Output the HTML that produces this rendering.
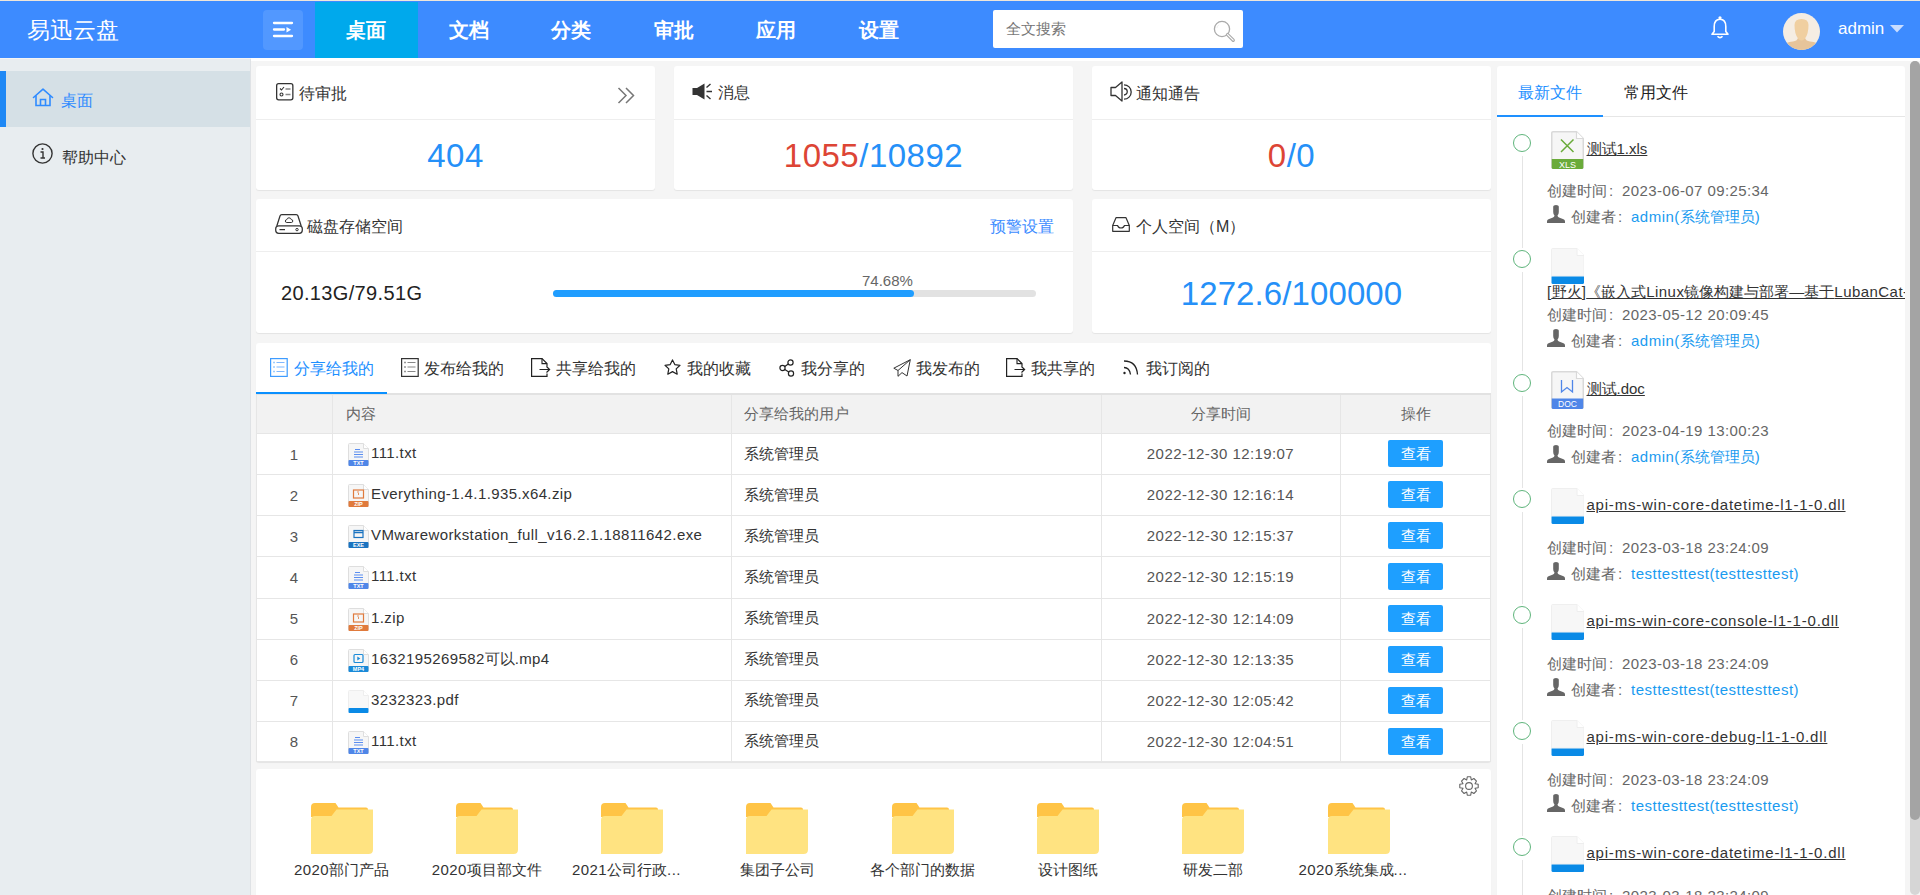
<!DOCTYPE html><html><head><meta charset="utf-8"><title>易迅云盘</title><style>
*{box-sizing:border-box;margin:0;padding:0}
html,body{width:1920px;height:895px;overflow:hidden}
body{position:relative;background:#f5f5f5;font-family:"Liberation Sans",sans-serif;color:#333;font-size:14px}
.a{position:absolute;white-space:nowrap}
svg{display:block;overflow:visible}
.card{position:absolute;background:#fff;border-radius:3px;box-shadow:0 1px 1px rgba(0,0,0,0.07)}
.hl{position:absolute;height:1px;background:#eeeeee}
.nav{position:absolute;top:2px;height:56px;width:102.5px;text-align:center;color:#fff;font-weight:900;font-size:20px;line-height:56px}
.ttl{font-size:16px;color:#333;line-height:22px}
.num{font-size:33px;color:#2590f8;line-height:40px;text-align:center;letter-spacing:0.5px}
.red{color:#dd4535}
.tab{font-size:16px;color:#333;line-height:22px}
.th{font-size:14.5px;color:#666;line-height:20px}
.tn{font-size:15px;color:#555;line-height:22px;width:76px;left:256px;text-align:center}
.tc{font-size:15px;color:#333;line-height:22px}
.tdt{left:1101px;width:239px;text-align:center;color:#555}
.btn{left:1388px;width:55px;height:27px;background:#1e9fff;border-radius:2px;color:#fff;font-size:15px;line-height:27px;text-align:center}
.tb{left:256px;width:1235px;height:1px;background:#e6e6e6}
.tl{font-size:15px;color:#666;line-height:22px}
.lk{color:#1a9bf0}
.fn{font-size:15px;color:#333;line-height:22px;text-decoration:underline}
.fl{font-size:15px;color:#333;line-height:22px;text-align:center;width:140px}
</style></head><body>
<svg width="0" height="0" style="position:absolute"><defs>
<symbol id="fbody" viewBox="0 0 21 23"><path d="M1.5 0.5H15.5L20.5 5.5V21.5a1 1 0 0 1-1 1H1.5a1 1 0 0 1-1-1V1.5a1 1 0 0 1 1-1z" fill="#f6f6f6" stroke="#dedede" stroke-width="1"/><path d="M15.5 0.5V5.5H20.5" fill="#fff" stroke="#dedede" stroke-width="1"/></symbol>
<symbol id="fi-txt" viewBox="0 0 21 23"><use href="#fbody"/><path d="M7 6.5h5M6 9h9M6 11.5h9M6 14h9" stroke="#5b8ef0" stroke-width="1"/><rect x="0.5" y="17" width="20" height="6" rx="1" fill="#4f86e8"/><text x="10.5" y="22" font-size="5.5" fill="#fff" text-anchor="middle" font-family="Liberation Sans" font-weight="bold">TXT</text></symbol>
<symbol id="fi-zip" viewBox="0 0 21 23"><use href="#fbody"/><rect x="5.5" y="6" width="10" height="8" fill="none" stroke="#e07a3c" stroke-width="1.2"/><path d="M10 7v2M10.5 9v2" stroke="#e07a3c" stroke-width="0.8"/><rect x="0.5" y="17" width="20" height="6" rx="1" fill="#e07a3c"/><text x="10.5" y="22" font-size="5.5" fill="#fff" text-anchor="middle" font-family="Liberation Sans" font-weight="bold">ZIP</text></symbol>
<symbol id="fi-exe" viewBox="0 0 21 23"><use href="#fbody"/><rect x="6" y="5.5" width="9" height="7" fill="none" stroke="#1a73c0" stroke-width="1.2"/><path d="M6 7.5h9" stroke="#1a73c0" stroke-width="1.5"/><rect x="0.5" y="17" width="20" height="6" rx="1" fill="#1a73c0"/><text x="10.5" y="22" font-size="5.5" fill="#fff" text-anchor="middle" font-family="Liberation Sans" font-weight="bold">EXE</text></symbol>
<symbol id="fi-mp4" viewBox="0 0 21 23"><use href="#fbody"/><rect x="6" y="5.5" width="9" height="8" rx="1" fill="none" stroke="#1a8ad8" stroke-width="1.2"/><path d="M9.3 7.6v3.8l3-1.9z" fill="#1a8ad8"/><rect x="0.5" y="17" width="20" height="6" rx="1" fill="#1a8ad8"/><text x="10.5" y="22" font-size="5.5" fill="#fff" text-anchor="middle" font-family="Liberation Sans" font-weight="bold">MP4</text></symbol>
<symbol id="fi-pdf" viewBox="0 0 21 23"><path d="M1.5 0.5H15.5L20.5 5.5V19H0.5V1.5a1 1 0 0 1 1-1z" fill="#f8f8f8" stroke="#eeeeee" stroke-width="1"/><path d="M15.5 0.5V5.5H20.5" fill="#fff" stroke="#eeeeee" stroke-width="1"/><rect x="0.5" y="18" width="20" height="5" rx="1" fill="#0a8ae6"/></symbol>
<symbol id="ti-body" viewBox="0 0 33 38"><path d="M2 0.75H25.5L32.25 7.5V36a1.5 1.5 0 0 1-1.5 1.5H2A1.5 1.5 0 0 1 0.75 36V2A1.25 1.25 0 0 1 2 0.75z" fill="#f6f6f6" stroke="#d9d9d9" stroke-width="1.5"/><path d="M25.5 0.75V7.5H32.25" fill="#fff" stroke="#d9d9d9" stroke-width="1.2"/></symbol>
<symbol id="ti-xls" viewBox="0 0 33 38"><use href="#ti-body"/><path d="M10 8.5l12.5 12.5M22.5 8.5L10 21" stroke="#6aab3a" stroke-width="1.5"/><path d="M0.75 28H32.25V36.5a1.5 1.5 0 0 1-1.5 1.5H2.25a1.5 1.5 0 0 1-1.5-1.5z" fill="#6aab3a"/><text x="16.5" y="36.5" font-size="9" fill="#fff" text-anchor="middle" font-family="Liberation Sans">XLS</text></symbol>
<symbol id="ti-doc" viewBox="0 0 33 38"><use href="#ti-body"/><path d="M10.5 9V21L16 16.5L21.5 21V9" fill="none" stroke="#4f86e8" stroke-width="1.3"/><path d="M0.75 27.5H32.25V36.5a1.5 1.5 0 0 1-1.5 1.5H2.25a1.5 1.5 0 0 1-1.5-1.5z" fill="#4f86e8"/><text x="16.5" y="36" font-size="8.5" fill="#fff" text-anchor="middle" font-family="Liberation Sans">DOC</text></symbol>
<symbol id="ti-dll" viewBox="0 0 33 36"><path d="M1.5 0.5H26L33 7.5V28H0.5V1.5a1 1 0 0 1 1-1z" fill="#f7f7f7" stroke="#efefef" stroke-width="1"/><path d="M26 0.5V7.5H33" fill="#fff" stroke="#eeeeee" stroke-width="1"/><path d="M0.5 28.5H33V34.5a1.5 1.5 0 0 1-1.5 1.5H2a1.5 1.5 0 0 1-1.5-1.5z" fill="#0a8ae6"/></symbol>
<symbol id="folder" viewBox="0 0 62 51"><path d="M0 4Q0 0 4 0H24.5L27.5 4.5H55Q57 4.5 57 6.5V14H0z" fill="#ffc446"/><path d="M0 17Q0 13 4 13H20.5L25.5 6.5H62V46.5Q62 51 57.5 51H0z" fill="#ffe381"/></symbol>
<symbol id="person" viewBox="0 0 18 18"><path d="M6.2 1.5Q6.2 0 9 0Q11.8 0 11.8 1.5V7Q11.8 9.5 10.5 10.5Q10.7 12 12 12.5L16.5 14.2Q18 14.8 18 16.5V18H0V16.5Q0 14.8 1.5 14.2L6 12.5Q7.3 12 7.5 10.5Q6.2 9.5 6.2 7z" fill="#666"/></symbol>
</defs></svg>
<div class="a" style="left:0;top:0;width:1920px;height:1px;background:#efe6da"></div>
<div class="a" style="left:0;top:1px;width:1920px;height:57px;background:#3d8bff"></div>
<div class="a" style="left:251px;top:58px;width:1669px;height:3px;background:#fff"></div>
<div class="a" style="left:27px;top:15.5px;font-size:22.5px;color:#fff;line-height:30px">易迅云盘</div>
<div class="a" style="left:263px;top:10px;width:40px;height:40px;border-radius:4px;background:#5298ff"></div>
<svg class="a" style="left:273px;top:21px" width="20" height="18"><path d="M1 2h18M1 8.5h10M1 15h18" stroke="#fff" stroke-width="2.3" stroke-linecap="round"/><path d="M13.5 6v5.5l4.6-2.75z" fill="#fff"/></svg>
<div class="nav" style="left:315.0px;background:#00a9ec">桌面</div>
<div class="nav" style="left:417.5px">文档</div>
<div class="nav" style="left:520.0px">分类</div>
<div class="nav" style="left:622.5px">审批</div>
<div class="nav" style="left:725.0px">应用</div>
<div class="nav" style="left:827.5px">设置</div>
<div class="a" style="left:993px;top:10px;width:250px;height:38px;background:#fff;border-radius:2px"></div>
<div class="a" style="left:1006px;top:18px;font-size:15px;color:#777;line-height:22px">全文搜索</div>
<svg class="a" style="left:1213px;top:20px" width="23" height="22"><circle cx="9" cy="9" r="7.6" fill="none" stroke="#aaaaaa" stroke-width="1.3"/><circle cx="9" cy="9" r="5.2" fill="none" stroke="#e6e6e6" stroke-width="0.6" stroke-dasharray="4 30" transform="rotate(190 9 9)"/><path d="M14.6 14.6l5.6 5.6" stroke="#aaaaaa" stroke-width="3.4" stroke-linecap="round"/><path d="M14.6 14.6l5.6 5.6" stroke="#ffffff" stroke-width="1.2" stroke-linecap="round"/></svg>
<svg class="a" style="left:1711px;top:16px" width="18" height="23"><circle cx="9" cy="1.8" r="1.6" fill="#fff"/><path d="M9 3.2C4.5 3.2 3.2 7 3.2 10.5V15.5L1 18.3H17L14.8 15.5V10.5C14.8 7 13.5 3.2 9 3.2z" fill="none" stroke="#fff" stroke-width="1.6" stroke-linejoin="round"/><path d="M6.5 20.3Q9 23 11.5 20.3" fill="none" stroke="#fff" stroke-width="1.6"/></svg>
<svg class="a" style="left:1783px;top:13px" width="37" height="37"><defs><clipPath id="avc"><circle cx="18.5" cy="18.5" r="18.5"/></clipPath></defs><g clip-path="url(#avc)"><rect width="37" height="37" fill="#f5ede3"/><path d="M0 37V33Q2 29 10 28.5Q14 28 15 25L22 25Q23 28 27 28.5Q35 29 37 33V37z" fill="#e6c49a"/><path d="M11.5 12Q11.5 6 18.5 6Q25.5 6 25.5 12Q25.5 21 22 25.5Q20.5 27.5 18.5 27.5Q16.5 27.5 15 25.5Q11.5 21 11.5 12z" fill="#f0cfa0"/></g></svg>
<div class="a" style="left:1838px;top:18px;font-size:17px;color:#fff;line-height:22px">admin</div>
<svg class="a" style="left:1890px;top:25px" width="14" height="8"><path d="M0 0H14L7 7.5z" fill="#c9ddff"/></svg>
<div class="a" style="left:0;top:59px;width:251px;height:836px;background:#e8edf0;border-right:1px solid #dfe2e5"></div>
<div class="a" style="left:0;top:71px;width:250px;height:56px;background:#d5e0e6"></div>
<div class="a" style="left:0;top:71px;width:6px;height:56px;background:#1e88f5"></div>
<svg class="a" style="left:32px;top:88px" width="22" height="19"><path d="M1.5 9.5L11 1.2L20.5 9.5" fill="none" stroke="#2f8bff" stroke-width="1.6" stroke-linejoin="round" stroke-linecap="round"/><path d="M4 7.5V17.5H18V7.5" fill="none" stroke="#2f8bff" stroke-width="1.6"/><path d="M8.5 17.5V11.5H13.5V17.5" fill="none" stroke="#2f8bff" stroke-width="1.6"/></svg>
<div class="a" style="left:61px;top:90px;font-size:16px;color:#2f8bff;line-height:22px">桌面</div>
<svg class="a" style="left:32px;top:143px" width="21" height="21"><circle cx="10.5" cy="10.5" r="9.6" fill="none" stroke="#333" stroke-width="1.4"/><circle cx="10.5" cy="6" r="1.1" fill="#333"/><path d="M8.5 9H11V15M8.5 15H13" fill="none" stroke="#333" stroke-width="1.4"/></svg>
<div class="a" style="left:62px;top:146.5px;font-size:16px;color:#333;line-height:22px">帮助中心</div>
<div class="card" style="left:256px;top:66px;width:399px;height:124px"></div>
<div class="card" style="left:674px;top:66px;width:399px;height:124px"></div>
<div class="card" style="left:1092px;top:66px;width:399px;height:124px"></div>
<div class="card" style="left:256px;top:199px;width:817px;height:134px"></div>
<div class="card" style="left:1092px;top:199px;width:399px;height:134px"></div>
<div class="card" style="left:256px;top:343px;width:1235px;height:419px"></div>
<div class="card" style="left:256px;top:769px;width:1235px;height:140px"></div>
<div class="card" style="left:1497px;top:66px;width:408px;height:840px"></div>
<div class="hl" style="left:256px;top:119px;width:399px"></div>
<div class="hl" style="left:674px;top:119px;width:399px"></div>
<div class="hl" style="left:1092px;top:119px;width:399px"></div>
<div class="hl" style="left:256px;top:251px;width:817px"></div>
<div class="hl" style="left:1092px;top:251px;width:399px"></div>
<svg class="a" style="left:276px;top:83px" width="18" height="18"><rect x="0.65" y="0.65" width="16.2" height="16.2" rx="2" fill="none" stroke="#333" stroke-width="1.3"/><path d="M4 5.5l1.5 1.5l2.5-3" fill="none" stroke="#333" stroke-width="1.1"/><circle cx="5.5" cy="11.5" r="1.5" fill="none" stroke="#333" stroke-width="1.1"/><path d="M9.5 6h5M9.5 11.5h5" stroke="#888" stroke-width="1.4"/></svg>
<div class="a ttl" style="left:299px;top:83px">待审批</div>
<svg class="a" style="left:617px;top:87px" width="19" height="18"><path d="M1.5 1l7.5 7.5l-7.5 7.5M9 1l7.5 7.5l-7.5 7.5" fill="none" stroke="#777" stroke-width="1.5"/></svg>
<div class="a num" style="left:256px;top:135.5px;width:399px">404</div>
<svg class="a" style="left:692px;top:83px" width="21" height="17"><path d="M0.5 5H5L12.5 0.5V16.5L5 12H0.5z" fill="#333"/><path d="M14.5 4.5L18.5 1M14.5 8.5H20M14.5 12.5L18.5 16" stroke="#333" stroke-width="1.4"/></svg>
<div class="a ttl" style="left:718px;top:82px">消息</div>
<div class="a num" style="left:674px;top:135.5px;width:399px"><span class="red">1055</span>/10892</div>
<svg class="a" style="left:1110px;top:81px" width="22" height="21"><path d="M1 6.5H5.5L12 1V20L5.5 14.5H1z" fill="none" stroke="#333" stroke-width="1.3" stroke-linejoin="round"/><path d="M14 7.5A3.2 3.2 0 0 1 14 14" fill="none" stroke="#333" stroke-width="1.3"/><path d="M14 3.8A7 7 0 0 1 14 18.2" fill="none" stroke="#333" stroke-width="1.3"/></svg>
<div class="a ttl" style="left:1136px;top:83px">通知通告</div>
<div class="a num" style="left:1092px;top:135.5px;width:399px"><span class="red">0</span>/0</div>
<svg class="a" style="left:275px;top:214px" width="28" height="20"><path d="M1.8 12L5 2Q5.4 0.7 6.8 0.7H21.2Q22.6 0.7 23 2L26.2 12" fill="none" stroke="#333" stroke-width="1.25"/><rect x="0.7" y="11.8" width="26.6" height="7.5" rx="3" fill="none" stroke="#333" stroke-width="1.25"/><path d="M4.5 15.6H10" stroke="#333" stroke-width="1.25"/><circle cx="22" cy="15.6" r="1.2" fill="none" stroke="#333" stroke-width="1"/><path d="M11.8 8.5H16.3Q17.8 8.5 17.8 7Q17.8 5.6 16.3 5.6Q15.8 3.8 14 3.8Q12.2 3.8 11.8 5.6Q10.3 5.8 10.3 7Q10.3 8.5 11.8 8.5z" fill="none" stroke="#333" stroke-width="1"/></svg>
<div class="a ttl" style="left:307px;top:216px">磁盘存储空间</div>
<div class="a ttl" style="left:990px;top:216px;color:#3c8cff">预警设置</div>
<div class="a" style="left:281px;top:280px;font-size:20px;color:#222;line-height:26px;letter-spacing:0.35px">20.13G/79.51G</div>
<div class="a" style="left:553px;top:290px;width:483px;height:7px;border-radius:4px;background:#e2e2e2"></div>
<div class="a" style="left:553px;top:290px;width:361px;height:7px;border-radius:4px;background:#1f9dff"></div>
<div class="a" style="left:862px;top:270.5px;font-size:15px;color:#666;line-height:20px">74.68%</div>
<svg class="a" style="left:1112px;top:217px" width="18" height="15"><path d="M0.7 8.5L4 0.7H14L17.3 8.5V14.3H0.7z" fill="none" stroke="#333" stroke-width="1.2" stroke-linejoin="round"/><path d="M0.7 8.5H5.5Q6.5 11 9 11Q11.5 11 12.5 8.5H17.3" fill="none" stroke="#333" stroke-width="1.2"/></svg>
<div class="a ttl" style="left:1136px;top:216px">个人空间（M）</div>
<div class="a num" style="left:1092px;top:274px;width:399px;letter-spacing:0.1px">1272.6/100000</div>
<div class="a tab" style="left:293.6px;top:358px;color:#1e90ff">分享给我的</div>
<div class="a tab" style="left:424px;top:358px;color:#333">发布给我的</div>
<div class="a tab" style="left:555.5px;top:358px;color:#333">共享给我的</div>
<div class="a tab" style="left:687px;top:358px;color:#333">我的收藏</div>
<div class="a tab" style="left:801px;top:358px;color:#333">我分享的</div>
<div class="a tab" style="left:916px;top:358px;color:#333">我发布的</div>
<div class="a tab" style="left:1031px;top:358px;color:#333">我共享的</div>
<div class="a tab" style="left:1146px;top:358px;color:#333">我订阅的</div>
<svg class="a" style="left:270px;top:358px" width="18" height="19"><rect x="0.6" y="0.6" width="16.6" height="17.8" fill="none" stroke="#3d9bff" stroke-width="1.2"/><path d="M3.5 4.5h1M3.5 9h1M3.5 13.5h1" stroke="#3d9bff" stroke-width="1.3"/><path d="M6.5 4.5h8M6.5 9h8M6.5 13.5h8" stroke="#7fb8ff" stroke-width="1.1"/></svg>
<svg class="a" style="left:400.5px;top:358px" width="18" height="19"><rect x="0.6" y="0.6" width="16.6" height="17.8" fill="none" stroke="#333" stroke-width="1.2"/><path d="M3.5 4.5h1M3.5 9h1M3.5 13.5h1" stroke="#333" stroke-width="1.3"/><path d="M6.5 4.5h8M6.5 9h8M6.5 13.5h8" stroke="#888" stroke-width="1.1"/></svg>
<svg class="a" style="left:530.5px;top:357.5px" width="20" height="19"><path d="M16 8.5V5.6L11 0.6H0.6V18.4H16V15.5" fill="none" stroke="#222" stroke-width="1.2"/><path d="M11 0.6V5.6H16" fill="none" stroke="#222" stroke-width="1.1"/><path d="M8.5 11.5H18.5M15.5 8.5L18.6 11.5L15.5 14.5" fill="none" stroke="#222" stroke-width="1.2"/></svg>
<svg class="a" style="left:1006px;top:357.5px" width="20" height="19"><path d="M16 8.5V5.6L11 0.6H0.6V18.4H16V15.5" fill="none" stroke="#222" stroke-width="1.2"/><path d="M11 0.6V5.6H16" fill="none" stroke="#222" stroke-width="1.1"/><path d="M8.5 11.5H18.5M15.5 8.5L18.6 11.5L15.5 14.5" fill="none" stroke="#222" stroke-width="1.2"/></svg>
<svg class="a" style="left:663.5px;top:359px" width="17" height="17"><path d="M8.5 0.9L10.8 5.6L16 6.3L12.2 9.9L13.2 15.2L8.5 12.6L3.8 15.2L4.8 9.9L1 6.3L6.2 5.6z" fill="none" stroke="#222" stroke-width="1.2" stroke-linejoin="round"/></svg>
<svg class="a" style="left:779px;top:359px" width="16" height="18"><circle cx="11.5" cy="3.5" r="2.6" fill="none" stroke="#222" stroke-width="1.2"/><circle cx="3.5" cy="9" r="2.6" fill="none" stroke="#222" stroke-width="1.2"/><circle cx="12" cy="14.5" r="2.6" fill="none" stroke="#222" stroke-width="1.2"/><path d="M5.8 7.6L9.3 5M5.8 10.4L9.8 13" stroke="#222" stroke-width="1.2"/></svg>
<svg class="a" style="left:892.5px;top:358.5px" width="18" height="18"><path d="M17.3 0.7L0.8 9.2L5 11.5M17.3 0.7L14 17L9 13.6M17.3 0.7L5 11.5V17.3L9 13.6" fill="none" stroke="#333" stroke-width="1" stroke-linejoin="round"/></svg>
<svg class="a" style="left:1123px;top:360px" width="16" height="15"><circle cx="1.5" cy="13" r="1.2" fill="#222"/><path d="M1 7.5Q6.5 7.5 7.5 14.5M1 1Q13.5 1 14.5 14.5" fill="none" stroke="#222" stroke-width="1.3"/></svg>
<div class="a" style="left:256px;top:393px;width:1235px;height:2px;background:#e2e2e2"></div>
<div class="a" style="left:256px;top:392px;width:131px;height:2px;background:#0a90ff"></div>
<div class="a" style="left:256px;top:395px;width:1235px;height:38px;background:#f2f2f2"></div>
<div class="a tb" style="top:433px"></div>
<div class="a tb" style="top:761px"></div>
<div class="a" style="left:256px;top:395px;width:1px;height:367px;background:#e6e6e6"></div>
<div class="a" style="left:332px;top:395px;width:1px;height:367px;background:#e6e6e6"></div>
<div class="a" style="left:731px;top:395px;width:1px;height:367px;background:#e6e6e6"></div>
<div class="a" style="left:1101px;top:395px;width:1px;height:367px;background:#e6e6e6"></div>
<div class="a" style="left:1340px;top:395px;width:1px;height:367px;background:#e6e6e6"></div>
<div class="a" style="left:1490px;top:395px;width:1px;height:367px;background:#e6e6e6"></div>
<div class="a th" style="left:346px;top:404px">内容</div>
<div class="a th" style="left:744px;top:404px">分享给我的用户</div>
<div class="a th" style="left:1101px;top:404px;width:239px;text-align:center">分享时间</div>
<div class="a th" style="left:1340px;top:404px;width:151px;text-align:center">操作</div>
<div class="a tn" style="top:443.6px">1</div>
<svg class="a" style="left:348px;top:443.1px" width="21" height="23"><use href="#fi-txt"/></svg>
<div class="a tc" style="left:371px;top:442.1px"><span style="letter-spacing:0.4px">111.txt</span></div>
<div class="a tc" style="left:744px;top:442.6px">系统管理员</div>
<div class="a tc tdt" style="top:443.1px;letter-spacing:0.42px">2022-12-30 12:19:07</div>
<div class="a btn" style="top:440.1px">查看</div>
<div class="a tn" style="top:484.7px">2</div>
<svg class="a" style="left:348px;top:484.2px" width="21" height="23"><use href="#fi-zip"/></svg>
<div class="a tc" style="left:371px;top:483.2px"><span style="letter-spacing:0.4px">Everything-1.4.1.935.x64.zip</span></div>
<div class="a tc" style="left:744px;top:483.7px">系统管理员</div>
<div class="a tc tdt" style="top:484.2px;letter-spacing:0.42px">2022-12-30 12:16:14</div>
<div class="a btn" style="top:481.2px">查看</div>
<div class="a tb" style="top:474px"></div>
<div class="a tn" style="top:525.8px">3</div>
<svg class="a" style="left:348px;top:525.3px" width="21" height="23"><use href="#fi-exe"/></svg>
<div class="a tc" style="left:371px;top:524.3px"><span style="letter-spacing:0.4px">VMwareworkstation_full_v16.2.1.18811642.exe</span></div>
<div class="a tc" style="left:744px;top:524.8px">系统管理员</div>
<div class="a tc tdt" style="top:525.3px;letter-spacing:0.42px">2022-12-30 12:15:37</div>
<div class="a btn" style="top:522.3px">查看</div>
<div class="a tb" style="top:515px"></div>
<div class="a tn" style="top:566.9px">4</div>
<svg class="a" style="left:348px;top:566.4px" width="21" height="23"><use href="#fi-txt"/></svg>
<div class="a tc" style="left:371px;top:565.4px"><span style="letter-spacing:0.4px">111.txt</span></div>
<div class="a tc" style="left:744px;top:565.9px">系统管理员</div>
<div class="a tc tdt" style="top:566.4px;letter-spacing:0.42px">2022-12-30 12:15:19</div>
<div class="a btn" style="top:563.4px">查看</div>
<div class="a tb" style="top:556px"></div>
<div class="a tn" style="top:608.1px">5</div>
<svg class="a" style="left:348px;top:607.6px" width="21" height="23"><use href="#fi-zip"/></svg>
<div class="a tc" style="left:371px;top:606.6px"><span style="letter-spacing:0.4px">1.zip</span></div>
<div class="a tc" style="left:744px;top:607.1px">系统管理员</div>
<div class="a tc tdt" style="top:607.6px;letter-spacing:0.42px">2022-12-30 12:14:09</div>
<div class="a btn" style="top:604.6px">查看</div>
<div class="a tb" style="top:598px"></div>
<div class="a tn" style="top:649.2px">6</div>
<svg class="a" style="left:348px;top:648.7px" width="21" height="23"><use href="#fi-mp4"/></svg>
<div class="a tc" style="left:371px;top:647.7px"><span style="letter-spacing:0.4px">1632195269582</span>可以<span style="letter-spacing:0.4px">.mp4</span></div>
<div class="a tc" style="left:744px;top:648.2px">系统管理员</div>
<div class="a tc tdt" style="top:648.7px;letter-spacing:0.42px">2022-12-30 12:13:35</div>
<div class="a btn" style="top:645.7px">查看</div>
<div class="a tb" style="top:639px"></div>
<div class="a tn" style="top:690.3px">7</div>
<svg class="a" style="left:348px;top:689.8px" width="21" height="23"><use href="#fi-pdf"/></svg>
<div class="a tc" style="left:371px;top:688.8px"><span style="letter-spacing:0.4px">3232323.pdf</span></div>
<div class="a tc" style="left:744px;top:689.3px">系统管理员</div>
<div class="a tc tdt" style="top:689.8px;letter-spacing:0.42px">2022-12-30 12:05:42</div>
<div class="a btn" style="top:686.8px">查看</div>
<div class="a tb" style="top:680px"></div>
<div class="a tn" style="top:731.4px">8</div>
<svg class="a" style="left:348px;top:730.9px" width="21" height="23"><use href="#fi-txt"/></svg>
<div class="a tc" style="left:371px;top:729.9px"><span style="letter-spacing:0.4px">111.txt</span></div>
<div class="a tc" style="left:744px;top:730.4px">系统管理员</div>
<div class="a tc tdt" style="top:730.9px;letter-spacing:0.42px">2022-12-30 12:04:51</div>
<div class="a btn" style="top:727.9px">查看</div>
<div class="a tb" style="top:721px"></div>
<svg class="a" style="left:1459px;top:776px" width="20" height="20"><path d="M8.3 0.8H11.7L12.3 4L14.9 2.5L17.5 5.1L16 7.7L19.2 8.3V11.7L16 12.3L17.5 14.9L14.9 17.5L12.3 16L11.7 19.2H8.3L7.7 16L5.1 17.5L2.5 14.9L4 12.3L0.8 11.7V8.3L4 7.7L2.5 5.1L5.1 2.5L7.7 4z" fill="none" stroke="#666" stroke-width="1.1" stroke-linejoin="round"/><circle cx="10" cy="10" r="3.4" fill="none" stroke="#666" stroke-width="1.1"/></svg>
<svg class="a" style="left:310.5px;top:803px" width="62" height="51"><use href="#folder"/></svg>
<div class="a fl" style="left:271.5px;top:859px"><span style="letter-spacing:0.4px">2020</span>部门产品</div>
<svg class="a" style="left:455.8px;top:803px" width="62" height="51"><use href="#folder"/></svg>
<div class="a fl" style="left:416.8px;top:859px"><span style="letter-spacing:0.4px">2020</span>项目部文件</div>
<svg class="a" style="left:601.1px;top:803px" width="62" height="51"><use href="#folder"/></svg>
<div class="a fl" style="left:572.1px;top:859px;width:120px;text-align:left"><span style="letter-spacing:0.4px">2021</span>公司行政<span style="letter-spacing:0.4px">...</span></div>
<svg class="a" style="left:746.4px;top:803px" width="62" height="51"><use href="#folder"/></svg>
<div class="a fl" style="left:707.4px;top:859px">集团子公司</div>
<svg class="a" style="left:891.7px;top:803px" width="62" height="51"><use href="#folder"/></svg>
<div class="a fl" style="left:852.7px;top:859px">各个部门的数据</div>
<svg class="a" style="left:1037.0px;top:803px" width="62" height="51"><use href="#folder"/></svg>
<div class="a fl" style="left:998.0px;top:859px">设计图纸</div>
<svg class="a" style="left:1182.3px;top:803px" width="62" height="51"><use href="#folder"/></svg>
<div class="a fl" style="left:1143.3px;top:859px">研发二部</div>
<svg class="a" style="left:1327.6px;top:803px" width="62" height="51"><use href="#folder"/></svg>
<div class="a fl" style="left:1298.6px;top:859px;width:120px;text-align:left"><span style="letter-spacing:0.4px">2020</span>系统集成<span style="letter-spacing:0.4px">...</span></div>
<div class="a" style="left:1517.5px;top:81.5px;font-size:16px;color:#1e90ff;line-height:22px">最新文件</div>
<div class="a" style="left:1624px;top:81.5px;font-size:16px;color:#222;line-height:22px">常用文件</div>
<div class="a" style="left:1497px;top:116px;width:408px;height:1px;background:#e6e6e6"></div>
<div class="a" style="left:1497px;top:115px;width:106px;height:2px;background:#1e90ff"></div>
<div class="a" style="left:1512.7px;top:133.7px;width:18px;height:18px;border-radius:50%;border:1.3px solid #5fb57c;background:#fff"></div>
<div class="a" style="left:1522px;top:156px;width:1px;height:92px;background:#e4e4e4"></div>
<svg class="a" style="left:1550.5px;top:131px" width="33" height="38"><use href="#ti-xls"/></svg>
<div class="a fn" style="left:1586.5px;top:138px">测试<span style="letter-spacing:0px">1.xls</span></div>
<div class="a tl" style="left:1547px;top:180px">创建时间<span style="display:inline-block;width:15px;padding-left:2px">:</span><span style="letter-spacing:0.41px">2023-06-07 09:25:34</span></div>
<svg class="a" style="left:1547px;top:204.5px" width="18" height="18"><use href="#person"/></svg>
<div class="a tl" style="left:1571px;top:206px">创建者<span style="display:inline-block;width:15px;padding-left:2px">:</span><span class="lk"><span style="letter-spacing:0.5px">admin(</span>系统管理员<span style="letter-spacing:0.5px">)</span></span></div>
<div class="a" style="left:1512.7px;top:249.7px;width:18px;height:18px;border-radius:50%;border:1.3px solid #5fb57c;background:#fff"></div>
<div class="a" style="left:1522px;top:272px;width:1px;height:99px;background:#e4e4e4"></div>
<svg class="a" style="left:1550.5px;top:248px" width="33" height="36"><use href="#ti-dll"/></svg>
<div class="a fn" style="left:1547px;top:281px;width:358px;overflow:hidden"><span style="letter-spacing:0.45px">[</span>野火<span style="letter-spacing:0.45px">]</span>《嵌入式<span style="letter-spacing:0.45px">Linux</span>镜像构建与部署—基于<span style="letter-spacing:0.45px">LubanCat-RK356x</span>》</div>
<div class="a tl" style="left:1547px;top:304px">创建时间<span style="display:inline-block;width:15px;padding-left:2px">:</span><span style="letter-spacing:0.41px">2023-05-12 20:09:45</span></div>
<svg class="a" style="left:1547px;top:328.5px" width="18" height="18"><use href="#person"/></svg>
<div class="a tl" style="left:1571px;top:330px">创建者<span style="display:inline-block;width:15px;padding-left:2px">:</span><span class="lk"><span style="letter-spacing:0.5px">admin(</span>系统管理员<span style="letter-spacing:0.5px">)</span></span></div>
<div class="a" style="left:1512.7px;top:373.7px;width:18px;height:18px;border-radius:50%;border:1.3px solid #5fb57c;background:#fff"></div>
<div class="a" style="left:1522px;top:396px;width:1px;height:92px;background:#e4e4e4"></div>
<svg class="a" style="left:1550.5px;top:371px" width="33" height="38"><use href="#ti-doc"/></svg>
<div class="a fn" style="left:1586.5px;top:378px">测试<span style="letter-spacing:0px">.doc</span></div>
<div class="a tl" style="left:1547px;top:420px">创建时间<span style="display:inline-block;width:15px;padding-left:2px">:</span><span style="letter-spacing:0.41px">2023-04-19 13:00:23</span></div>
<svg class="a" style="left:1547px;top:444.5px" width="18" height="18"><use href="#person"/></svg>
<div class="a tl" style="left:1571px;top:446px">创建者<span style="display:inline-block;width:15px;padding-left:2px">:</span><span class="lk"><span style="letter-spacing:0.5px">admin(</span>系统管理员<span style="letter-spacing:0.5px">)</span></span></div>
<div class="a" style="left:1512.7px;top:489.7px;width:18px;height:18px;border-radius:50%;border:1.3px solid #5fb57c;background:#fff"></div>
<div class="a" style="left:1522px;top:512px;width:1px;height:92px;background:#e4e4e4"></div>
<svg class="a" style="left:1550.5px;top:488px" width="33" height="36"><use href="#ti-dll"/></svg>
<div class="a fn" style="left:1586.5px;top:494px"><span style="letter-spacing:0.78px">api-ms-win-core-datetime-l1-1-0.dll</span></div>
<div class="a tl" style="left:1547px;top:537px">创建时间<span style="display:inline-block;width:15px;padding-left:2px">:</span><span style="letter-spacing:0.41px">2023-03-18 23:24:09</span></div>
<svg class="a" style="left:1547px;top:561.5px" width="18" height="18"><use href="#person"/></svg>
<div class="a tl" style="left:1571px;top:563px">创建者<span style="display:inline-block;width:15px;padding-left:2px">:</span><span class="lk"><span style="letter-spacing:0.5px">testtesttest(testtesttest)</span></span></div>
<div class="a" style="left:1512.7px;top:605.7px;width:18px;height:18px;border-radius:50%;border:1.3px solid #5fb57c;background:#fff"></div>
<div class="a" style="left:1522px;top:628px;width:1px;height:92px;background:#e4e4e4"></div>
<svg class="a" style="left:1550.5px;top:604px" width="33" height="36"><use href="#ti-dll"/></svg>
<div class="a fn" style="left:1586.5px;top:610px"><span style="letter-spacing:0.78px">api-ms-win-core-console-l1-1-0.dll</span></div>
<div class="a tl" style="left:1547px;top:653px">创建时间<span style="display:inline-block;width:15px;padding-left:2px">:</span><span style="letter-spacing:0.41px">2023-03-18 23:24:09</span></div>
<svg class="a" style="left:1547px;top:677.5px" width="18" height="18"><use href="#person"/></svg>
<div class="a tl" style="left:1571px;top:679px">创建者<span style="display:inline-block;width:15px;padding-left:2px">:</span><span class="lk"><span style="letter-spacing:0.5px">testtesttest(testtesttest)</span></span></div>
<div class="a" style="left:1512.7px;top:721.7px;width:18px;height:18px;border-radius:50%;border:1.3px solid #5fb57c;background:#fff"></div>
<div class="a" style="left:1522px;top:744px;width:1px;height:92px;background:#e4e4e4"></div>
<svg class="a" style="left:1550.5px;top:720px" width="33" height="36"><use href="#ti-dll"/></svg>
<div class="a fn" style="left:1586.5px;top:726px"><span style="letter-spacing:0.78px">api-ms-win-core-debug-l1-1-0.dll</span></div>
<div class="a tl" style="left:1547px;top:769px">创建时间<span style="display:inline-block;width:15px;padding-left:2px">:</span><span style="letter-spacing:0.41px">2023-03-18 23:24:09</span></div>
<svg class="a" style="left:1547px;top:793.5px" width="18" height="18"><use href="#person"/></svg>
<div class="a tl" style="left:1571px;top:795px">创建者<span style="display:inline-block;width:15px;padding-left:2px">:</span><span class="lk"><span style="letter-spacing:0.5px">testtesttest(testtesttest)</span></span></div>
<div class="a" style="left:1512.7px;top:837.7px;width:18px;height:18px;border-radius:50%;border:1.3px solid #5fb57c;background:#fff"></div>
<div class="a" style="left:1522px;top:860px;width:1px;height:38px;background:#e4e4e4"></div>
<svg class="a" style="left:1550.5px;top:836px" width="33" height="36"><use href="#ti-dll"/></svg>
<div class="a fn" style="left:1586.5px;top:842px"><span style="letter-spacing:0.78px">api-ms-win-core-datetime-l1-1-0.dll</span></div>
<div class="a tl" style="left:1547px;top:885px">创建时间<span style="display:inline-block;width:15px;padding-left:2px">:</span><span style="letter-spacing:0.41px">2023-03-18 23:24:09</span></div>
<svg class="a" style="left:1547px;top:909.5px" width="18" height="18"><use href="#person"/></svg>
<div class="a tl" style="left:1571px;top:911px">创建者<span style="display:inline-block;width:15px;padding-left:2px">:</span><span class="lk"><span style="letter-spacing:0.5px">testtesttest(testtesttest)</span></span></div>
<div class="a" style="left:1905px;top:61px;width:5px;height:834px;background:#f5f5f5"></div>
<div class="a" style="left:1910px;top:61px;width:10px;height:834px;background:#d6d6d6;border-radius:5px"></div>
<div class="a" style="left:1910px;top:61px;width:10px;height:759px;background:#a4a4a4;border-radius:5px"></div>
</body></html>
